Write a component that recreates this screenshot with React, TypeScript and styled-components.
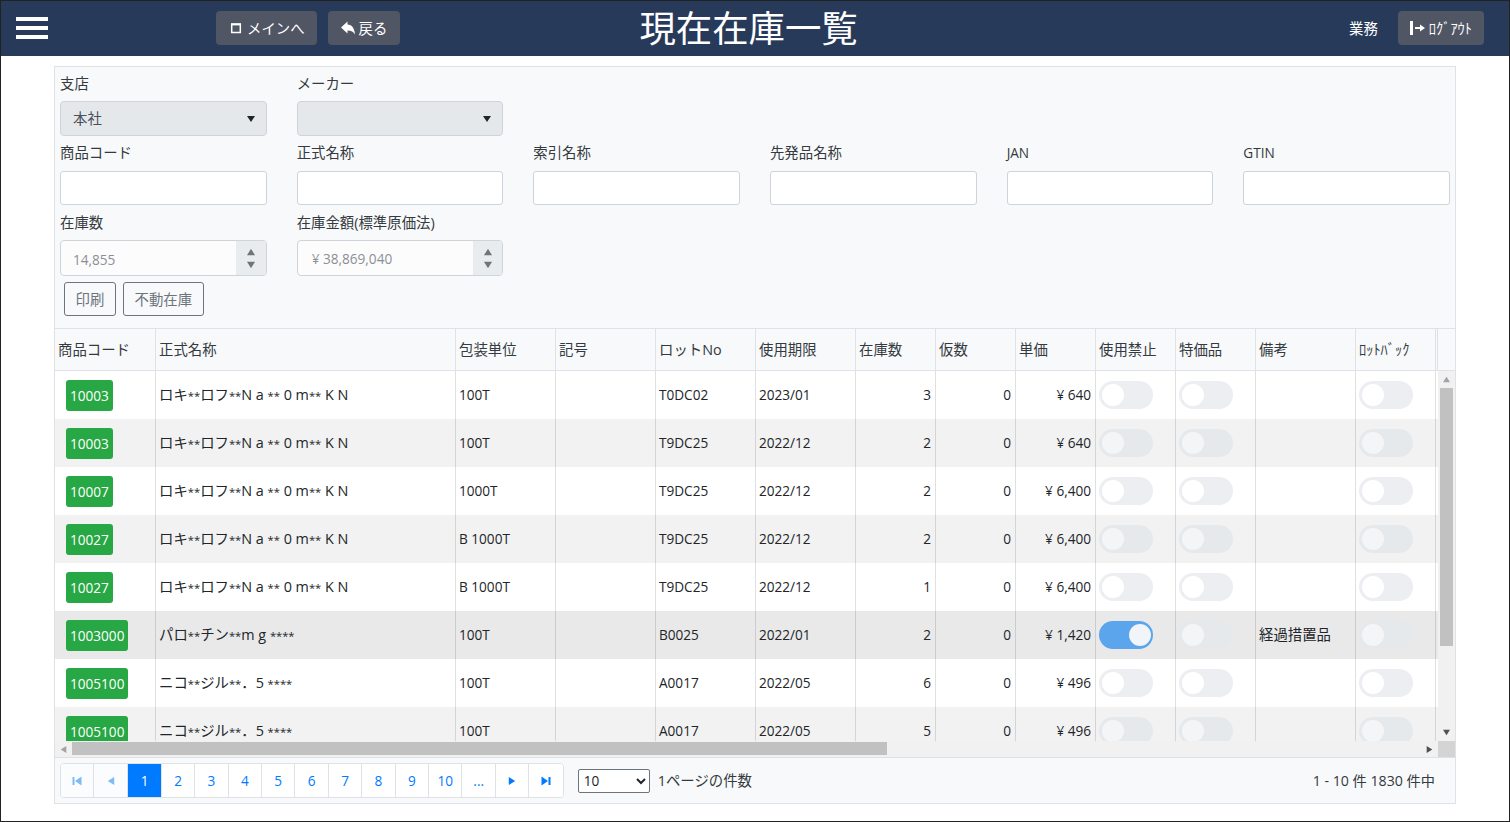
import { createGlobalStyle, styled } from 'styled-components'

const GlobalStyle = createGlobalStyle`
  html, body {
    margin: 0;
    padding: 0;
    background: #fff;
  }
  body {
    font-family: "Open Sans", "Noto Sans CJK JP", sans-serif;
    font-size: 14.4px;
    color: #212529;
  }
`

const columns = [101, 300, 100, 100, 100, 100, 80, 80, 80, 80, 80, 100, 80, 2]

const headers = ['商品コード', '正式名称', '包装単位', '記号', 'ロットNo', '使用期限', '在庫数', '仮数', '単価', '使用禁止', '特価品', '備考', 'ﾛｯﾄﾊﾞｯｸ']

const loxName = 'ロキ**ロフ**N a ** 0 m** K N'
const nicoName = 'ニコ**ジル**．5 ****'

const rows = [
  { code: '10003', name: loxName, pack: '100T', lot: 'T0DC02', expiry: '2023/01', stock: 3, price: '¥ 640' },
  { code: '10003', name: loxName, pack: '100T', lot: 'T9DC25', expiry: '2022/12', stock: 2, price: '¥ 640' },
  { code: '10007', name: loxName, pack: '1000T', lot: 'T9DC25', expiry: '2022/12', stock: 2, price: '¥ 6,400' },
  { code: '10027', name: loxName, pack: 'B 1000T', lot: 'T9DC25', expiry: '2022/12', stock: 2, price: '¥ 6,400' },
  { code: '10027', name: loxName, pack: 'B 1000T', lot: 'T9DC25', expiry: '2022/12', stock: 1, price: '¥ 6,400' },
  { code: '1003000', name: 'パロ**チン**m g ****', pack: '100T', lot: 'B0025', expiry: '2022/01', stock: 2, price: '¥ 1,420', banned: true, note: '経過措置品' },
  { code: '1005100', name: nicoName, pack: '100T', lot: 'A0017', expiry: '2022/05', stock: 6, price: '¥ 496' },
  { code: '1005100', name: nicoName, pack: '100T', lot: 'A0017', expiry: '2022/05', stock: 5, price: '¥ 496' },
]

function Triangle({ dir, size = 8, color = 'currentColor' }: { dir: 'up' | 'down' | 'left' | 'right'; size?: number; color?: string }) {
  const points = { up: '5,1 10,9 0,9', down: '0,1 10,1 5,9', left: '9,0 9,10 1,5', right: '1,0 1,10 9,5' }[dir]
  return (
    <svg width={size} height={size} viewBox="0 0 10 10">
      <polygon points={points} fill={color} />
    </svg>
  )
}

function EdgeIcon({ dir }: { dir: 'first' | 'last' }) {
  return (
    <svg width="10" height="10" viewBox="0 0 10 10">
      {dir === 'first' ? (
        <path d="M0.5 1h2v8h-2zM9.5 0.5v9L3 5z" fill="currentColor" />
      ) : (
        <path d="M9.5 1h-2v8h2zM0.5 0.5v9L7 5z" fill="currentColor" />
      )}
    </svg>
  )
}

// the asterisks of the masked names are set smaller than the kana around them
function MaskedName({ text }: { text: string }) {
  return (
    <NameText>
      {text.split(/(\*+)/).map((part, i) => (part.startsWith('*') ? <Stars key={i}>{part}</Stars> : part))}
    </NameText>
  )
}

export default function App() {
  return (
    <Page>
      <GlobalStyle />
      <TopBar>
        <Hamburger>
          <span />
          <span />
          <span />
        </Hamburger>
        <NavGroup>
          <NavButton>
            <svg width="15" height="14" viewBox="0 0 15 14">
              <path d="M3.7 3h8.6v8.5H3.7z" fill="none" stroke="#fff" strokeWidth="1.5" />
              <path d="M3 3.5h10" stroke="#fff" strokeWidth="1.8" />
            </svg>
            メインへ
          </NavButton>
          <NavButton>
            <svg width="15" height="14" viewBox="0 0 15 14">
              <path d="M1 6.5 L7.5 0.5 V3.5 C12 3.5 14.5 7.5 15 13.5 C13.5 11 11.5 9.5 7.5 9.5 V12.5 Z" fill="#fff" />
            </svg>
            戻る
            <ButtonEnd />
          </NavButton>
        </NavGroup>
        <Title>現在在庫一覧</Title>
        <UserName>業務</UserName>
        <NavButton>
          <svg width="15" height="16" viewBox="0 0 15 16">
            <path d="M0 1h3v14H0z" fill="#fff" />
            <path d="M5 7h5V4.5L15 8l-5 3.5V9H5z" fill="#fff" />
          </svg>
          ﾛｸﾞｱｳﾄ
        </NavButton>
      </TopBar>

      <Content>
        <Panel>
          <Filters>
            <FormRow>
              <Field>
                <FieldLabel>支店</FieldLabel>
                <SelectBox>
                  <DisabledSelect disabled defaultValue="本社">
                    <option>本社</option>
                  </DisabledSelect>
                </SelectBox>
              </Field>
              <Field>
                <FieldLabel>メーカー</FieldLabel>
                <SelectBox>
                  <DisabledSelect disabled />
                </SelectBox>
              </Field>
            </FormRow>
            <FormRow $gap={6}>
              {['商品コード', '正式名称', '索引名称', '先発品名称', 'JAN', 'GTIN'].map((label) => (
                <Field key={label}>
                  <FieldLabel $latin={/^[A-Z]+$/.test(label)}>{label}</FieldLabel>
                  <TextInput />
                </Field>
              ))}
            </FormRow>
            <FormRow $gap={7}>
              <Field>
                <FieldLabel>在庫数</FieldLabel>
                <Spinner>
                  <SpinnerValue readOnly disabled value="14,855" $low />
                  <SpinnerArrows>
                    <Triangle dir="up" size={8} />
                    <Triangle dir="down" size={8} />
                  </SpinnerArrows>
                </Spinner>
              </Field>
              <Field>
                <FieldLabel>在庫金額(標準原価法)</FieldLabel>
                <Spinner>
                  <SpinnerValue readOnly disabled value="¥ 38,869,040" />
                  <SpinnerArrows>
                    <Triangle dir="up" size={8} />
                    <Triangle dir="down" size={8} />
                  </SpinnerArrows>
                </Spinner>
              </Field>
            </FormRow>
            <Actions>
              <OutlineButton>印刷</OutlineButton>
              <OutlineButton>不動在庫</OutlineButton>
            </Actions>
          </Filters>

          <HeadRow>
            <GridTable>
              <ColumnWidths />
              <thead>
                <tr>
                  {headers.map((h) => (
                    <HeadCell key={h}>{h}</HeadCell>
                  ))}
                  <HeadCell />
                </tr>
              </thead>
            </GridTable>
          </HeadRow>

          <BodyRow>
            <Viewport>
              <GridTable>
                <ColumnWidths />
                <tbody>
                  {rows.map((row, i) => (
                    <BodyLine key={i} $tone={row.banned ? 'selected' : i % 2 === 1 ? 'stripe' : 'plain'}>
                      <Cell>
                        <CodeBadge>{row.code}</CodeBadge>
                      </Cell>
                      <Cell>
                        <MaskedName text={row.name} />
                      </Cell>
                      <Cell>{row.pack}</Cell>
                      <Cell />
                      <Cell>{row.lot}</Cell>
                      <Cell>{row.expiry}</Cell>
                      <Cell $right>{row.stock}</Cell>
                      <Cell $right>0</Cell>
                      <Cell $right>{row.price}</Cell>
                      <Cell>
                        <Toggle $on={row.banned} $dim={i % 2 === 1} />
                      </Cell>
                      <Cell>
                        <Toggle $dim={i % 2 === 1} />
                      </Cell>
                      <Cell>
                        <NameText>{row.note}</NameText>
                      </Cell>
                      <Cell>
                        <Toggle $dim={i % 2 === 1} />
                      </Cell>
                      <FillerCell />
                    </BodyLine>
                  ))}
                </tbody>
              </GridTable>
            </Viewport>
            <VerticalBar>
              <BarArrow>
                <Triangle dir="up" size={7} color="#a3a3a3" />
              </BarArrow>
              <VerticalTrack>
                <VerticalThumb />
              </VerticalTrack>
              <BarArrow>
                <Triangle dir="down" size={7} color="#505050" />
              </BarArrow>
            </VerticalBar>
          </BodyRow>

          <HorizontalBar>
            <BarArrow>
              <Triangle dir="left" size={7} color="#a3a3a3" />
            </BarArrow>
            <HorizontalTrack>
              <HorizontalThumb />
            </HorizontalTrack>
            <BarArrow>
              <Triangle dir="right" size={7} color="#505050" />
            </BarArrow>
            <BarCorner />
          </HorizontalBar>

          <Footer>
            <Pager>
              <PageItem $disabled>
                <EdgeIcon dir="first" />
              </PageItem>
              <PageItem $disabled $wide>
                <Triangle dir="left" />
              </PageItem>
              <PageItem $active>1</PageItem>
              {['2', '3', '4', '5', '6', '7', '8', '9', '10', '...'].map((p) => (
                <PageItem key={p}>{p}</PageItem>
              ))}
              <PageItem>
                <Triangle dir="right" />
              </PageItem>
              <PageItem>
                <EdgeIcon dir="last" />
              </PageItem>
            </Pager>
            <PageSize defaultValue="10">
              <option>10</option>
              <option>20</option>
              <option>50</option>
            </PageSize>
            <PageSizeLabel>1ページの件数</PageSizeLabel>
            <Summary>1 - 10 件 1830 件中</Summary>
          </Footer>
        </Panel>
      </Content>
    </Page>
  )
}

function ColumnWidths() {
  return (
    <colgroup>
      {columns.map((w, i) => (
        <col key={i} style={{ width: w }} />
      ))}
    </colgroup>
  )
}

const Page = styled.div`
  box-sizing: border-box;
  width: 1510px;
  height: 822px;
  border: 1px solid #222;
  display: flex;
  flex-direction: column;
  overflow: hidden;
`

const TopBar = styled.header`
  flex: none;
  box-sizing: border-box;
  height: 55px;
  background: #283a5a;
  display: flex;
  align-items: center;
  padding: 0 25px 1px 15px;
`

const Hamburger = styled.div`
  width: 32px;
  display: flex;
  flex-direction: column;
  gap: 5px;

  span {
    height: 4px;
    background: #fff;
  }
`

const NavGroup = styled.div`
  display: flex;
  gap: 11px;
  margin-left: 168px;
`

const NavButton = styled.button`
  box-sizing: border-box;
  height: 34px;
  padding: 0 12px 2px;
  display: inline-flex;
  align-items: center;
  gap: 4px;
  border: none;
  border-radius: 4px;
  background: #505664;
  color: #fff;
  font: inherit;
  white-space: nowrap;

  svg {
    flex: none;
    margin-top: 2px;
  }
`

const ButtonEnd = styled.span`
  width: 1px;
  margin-left: -4px;
`

const Title = styled.h1`
  flex: 1;
  margin: 0 0 0 239px;
  font-size: 36.4px;
  font-weight: 400;
  line-height: 54px;
  color: #fff;
`

const UserName = styled.span`
  margin-right: 20px;
  padding-bottom: 2px;
  color: #fff;
`

const Content = styled.main`
  flex: 1;
  min-height: 0;
  padding: 10px 53px 17px;
`

const Panel = styled.section`
  box-sizing: border-box;
  height: 738px;
  background: #f8f9fa;
  border: 1px solid #dee2e6;
  display: flex;
  flex-direction: column;
`

const Filters = styled.div`
  flex: none;
  height: 261px;
  box-sizing: border-box;
  padding: 6px 5px 0;
  display: flex;
  flex-direction: column;
`

const FormRow = styled.div<{ $gap?: number }>`
  display: grid;
  grid-template-columns: repeat(6, 206.67px);
  column-gap: 30px;
  margin-top: ${(p) => p.$gap ?? 0}px;
`

const Field = styled.div`
  display: flex;
  flex-direction: column;
`

const FieldLabel = styled.label<{ $latin?: boolean }>`
  height: 21px;
  line-height: 21px;
  margin-bottom: 7px;
  font-size: ${(p) => (p.$latin ? '13.6px' : '14.4px')};
  color: #343a40;
  white-space: nowrap;
`

const SelectBox = styled.div`
  position: relative;
  height: 35px;

  &::after {
    content: '';
    position: absolute;
    right: 12px;
    top: 15px;
    border-left: 4px solid transparent;
    border-right: 4px solid transparent;
    border-top: 6px solid #212529;
  }
`

const DisabledSelect = styled.select`
  box-sizing: border-box;
  width: 100%;
  height: 100%;
  appearance: none;
  padding: 0 12px;
  border: 1px solid #ced4da;
  border-radius: 4px;
  background: #e5e8eb;
  color: #495057;
  font: inherit;
  opacity: 1;
`

const TextInput = styled.input`
  box-sizing: border-box;
  height: 34px;
  margin-top: 1px;
  padding: 0 12px;
  border: 1px solid #ced4da;
  border-radius: 3px;
  background: #fff;
  font: inherit;
`

const Spinner = styled.div`
  box-sizing: border-box;
  height: 36px;
  display: flex;
  border: 1px solid #ced4da;
  border-radius: 4px;
  overflow: hidden;
  background: #fcfcfd;
`

const SpinnerValue = styled.input<{ $low?: boolean }>`
  flex: 1;
  min-width: 0;
  box-sizing: border-box;
  padding: ${(p) => (p.$low ? '2px 12px 0' : '0 12px 0 14px')};
  border: none;
  background: transparent;
  color: #8b9095;
  font-family: inherit;
  font-size: 13.6px;
  opacity: 1;
`

const SpinnerArrows = styled.div`
  flex: none;
  width: 29.6px;
  background: #e9ecef;
  color: #6c757d;
  display: flex;
  flex-direction: column;
  align-items: center;
  justify-content: center;
  gap: 5px;
`

const Actions = styled.div`
  display: flex;
  gap: 7px;
  margin: 6px 0 0 4px;
`

const OutlineButton = styled.button`
  box-sizing: border-box;
  height: 34px;
  padding: 0 10.6px 2px;
  border: 1px solid #6c757d;
  border-radius: 3px;
  background: transparent;
  color: #6c757d;
  font: inherit;
`

const HeadRow = styled.div`
  flex: none;
  height: 43px;
  box-sizing: border-box;
  border-top: 1px solid #dee2e6;
  border-bottom: 1px solid #dee2e6;
  overflow: hidden;
`

const GridTable = styled.table`
  table-layout: fixed;
  width: 1383px;
  border-collapse: separate;
  border-spacing: 0;
`

const HeadCell = styled.th`
  box-sizing: border-box;
  height: 41px;
  padding: 0 0 2px 3px;
  border-right: 1px solid #dee2e6;
  font-weight: 400;
  text-align: left;
  color: #343a40;
  white-space: nowrap;
  overflow: hidden;
`

const BodyRow = styled.div`
  flex: none;
  height: 370px;
  display: flex;
  background: #f1f1f1;
`

const Viewport = styled.div`
  flex: none;
  width: 1383px;
  overflow: hidden;
`

const toneColors = { plain: '#fff', stripe: '#f2f2f2', selected: '#e9e9e9' }

const BodyLine = styled.tr<{ $tone: keyof typeof toneColors }>`
  background: ${(p) => toneColors[p.$tone]};
`

const Cell = styled.td<{ $right?: boolean }>`
  box-sizing: border-box;
  height: 48px;
  padding: 0 4px 2px 3px;
  border-right: 1px solid rgba(0, 0, 0, 0.12);
  font-size: 13.6px;
  text-align: ${(p) => (p.$right ? 'right' : 'left')};
  white-space: pre;
  overflow: hidden;
`

const FillerCell = styled.td`
  padding: 0;
`

const NameText = styled.span`
  display: inline-block;
  padding-bottom: 2px;
  font-size: 14.4px;
  vertical-align: middle;
`

const Stars = styled.span`
  font-size: 11.2px;
`

const CodeBadge = styled.span`
  display: inline-block;
  box-sizing: border-box;
  height: 31px;
  line-height: 32px;
  margin: 2px 0 0 8px;
  padding: 0 4px;
  border-radius: 3px;
  background: #28a745;
  color: #fff;
  vertical-align: middle;
`

const Toggle = styled.div<{ $on?: boolean; $dim?: boolean }>`
  position: relative;
  width: 54px;
  height: 28px;
  margin-top: 2px;
  border-radius: 14px;
  background: ${(p) => (p.$on ? '#5aa5ec' : p.$dim ? '#e6e9ec' : '#eceef1')};

  &::after {
    content: '';
    position: absolute;
    top: 3px;
    left: ${(p) => (p.$on ? '30px' : '3px')};
    width: 22px;
    height: 22px;
    border-radius: 50%;
    background: ${(p) => (p.$on ? '#f1f4f8' : p.$dim ? '#f4f5f7' : '#fff')};
  }
`

const VerticalBar = styled.div`
  flex: none;
  width: 17px;
  display: flex;
  flex-direction: column;
`

const BarArrow = styled.div`
  flex: none;
  width: 17px;
  height: 17px;
  display: flex;
  align-items: center;
  justify-content: center;
`

const VerticalTrack = styled.div`
  flex: 1;
  padding: 0 2px;
`

const VerticalThumb = styled.div`
  height: 258px;
  background: #c1c1c1;
`

const HorizontalBar = styled.div`
  flex: none;
  height: 17px;
  box-sizing: border-box;
  display: flex;
  background: #f1f1f1;
  border-bottom: 1px solid #dee2e6;
`

const HorizontalTrack = styled.div`
  flex: 1;
  padding: 1px 0 2px;
`

const HorizontalThumb = styled.div`
  height: 13px;
  width: 815px;
  background: #c1c1c1;
`

const BarCorner = styled.div`
  flex: none;
  width: 17px;
  background: #d4d4d4;
`

const Footer = styled.div`
  flex: 1;
  display: flex;
  align-items: center;
  padding: 0 20px 0 5px;
  font-size: 14.4px;
`

const Pager = styled.div`
  display: flex;
  height: 35px;
  box-sizing: border-box;
  border: 1px solid #dee2e6;
  border-radius: 4px;
  overflow: hidden;
  background: #fff;
  font-size: 13.6px;
`

const PageItem = styled.div<{ $active?: boolean; $disabled?: boolean; $wide?: boolean }>`
  box-sizing: border-box;
  width: ${(p) => (p.$wide ? '34px' : '33.42px')};
  display: flex;
  align-items: center;
  justify-content: center;
  border-right: 1px solid #dee2e6;
  color: ${(p) => (p.$active ? '#fff' : p.$disabled ? '#7cbcf5' : '#007bff')};
  background: ${(p) => (p.$active ? '#007bff' : p.$disabled ? '#fbfcfd' : '#fff')};

  &:last-child {
    border-right: none;
  }
`

const PageSize = styled.select`
  box-sizing: border-box;
  width: 72px;
  height: 24px;
  margin-left: 14px;
  padding: 0 0 0 1px;
  border: 1px solid #6c757d;
  border-radius: 2px;
  background: #fff;
  color: #212529;
  font-family: inherit;
  font-size: 13.6px;
`

const PageSizeLabel = styled.span`
  margin-left: 8px;
  padding-bottom: 2px;
  color: #343a40;
`

const Summary = styled.span`
  margin-left: auto;
  padding-bottom: 2px;
  font-size: 14.2px;
  color: #343a40;
`
